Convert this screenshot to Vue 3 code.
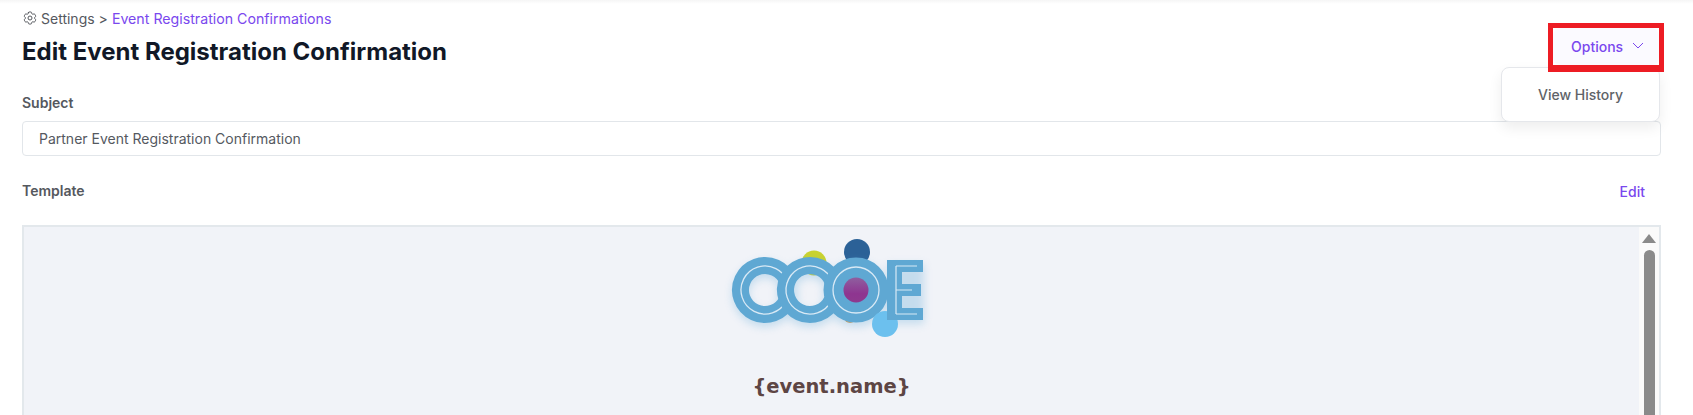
<script setup>
const eventName = '{event.name}'
</script>

<template>
  <div class="page">
    <div class="head">
      <div>
        <div class="crumbs">
          <svg class="gear" viewBox="0 0 24 24" fill="none" stroke="currentColor" stroke-width="1.5">
            <path stroke-linecap="round" stroke-linejoin="round" d="M9.594 3.94c.09-.542.56-.94 1.11-.94h2.593c.55 0 1.02.398 1.11.94l.213 1.281c.063.374.313.686.645.87.074.04.147.083.22.127.325.196.72.257 1.075.124l1.217-.456a1.125 1.125 0 0 1 1.37.49l1.296 2.247a1.125 1.125 0 0 1-.26 1.431l-1.003.827c-.293.241-.438.613-.43.992a7.723 7.723 0 0 1 0 .255c-.008.378.137.75.43.991l1.004.827c.424.35.534.955.26 1.43l-1.298 2.247a1.125 1.125 0 0 1-1.369.491l-1.217-.456c-.355-.133-.75-.072-1.076.124a6.47 6.47 0 0 1-.22.128c-.331.183-.581.495-.644.869l-.213 1.281c-.09.543-.56.94-1.11.94h-2.594c-.55 0-1.019-.398-1.11-.94l-.213-1.281c-.062-.374-.312-.686-.644-.87a6.52 6.52 0 0 1-.22-.127c-.325-.196-.72-.257-1.076-.124l-1.217.456a1.125 1.125 0 0 1-1.369-.49l-1.297-2.247a1.125 1.125 0 0 1 .26-1.431l1.004-.827c.292-.24.437-.613.43-.991a6.932 6.932 0 0 1 0-.255c.007-.38-.138-.751-.43-.992l-1.004-.827a1.125 1.125 0 0 1-.26-1.43l1.297-2.247a1.125 1.125 0 0 1 1.37-.491l1.216.456c.356.133.751.072 1.076-.124.072-.044.146-.086.22-.128.332-.183.582-.495.644-.869l.214-1.28Z" />
            <circle cx="12" cy="12" r="3" />
          </svg>
          <span>Settings</span>
          <span>&gt;</span>
          <a class="link">Event Registration Confirmations</a>
        </div>
        <h1>Edit Event Registration Confirmation</h1>
      </div>

      <div class="options">
        <button class="options-btn">
          Options
          <svg class="chev" viewBox="0 0 12 7" fill="none" stroke="currentColor" stroke-width="1">
            <path d="M1 1l5 5 5-5" />
          </svg>
        </button>
        <div class="menu">View History</div>
        <div class="marker"></div>
      </div>
    </div>

    <label class="label subject-label">Subject</label>
    <div class="input">Partner Event Registration Confirmation</div>

    <div class="template-row">
      <span class="label">Template</span>
      <a class="edit">Edit</a>
    </div>

    <div class="frame">
      <div class="frame-body">
        <svg class="logo" viewBox="0 0 260 125" width="260" height="125">
          <defs>
            <linearGradient id="purple" x1="0" y1="0" x2="0" y2="1">
              <stop offset="0" stop-color="#8f5f9f" />
              <stop offset="0.65" stop-color="#8e3590" />
              <stop offset="1" stop-color="#8e3a8e" />
            </linearGradient>
            <filter id="glow" x="-20%" y="-20%" width="140%" height="150%">
              <feGaussianBlur stdDeviation="4" />
            </filter>
          </defs>
          <circle cx="158" cy="31" r="13" fill="#2b6197" />
          <circle cx="115" cy="42" r="12.5" fill="#c9d22f" />
          <circle cx="151" cy="96" r="6" fill="#d2a05e" />

          <g filter="url(#glow)" opacity="0.3" fill="none" stroke="#5fa8d6" stroke-width="17">
            <circle cx="66" cy="73" r="24.5" />
            <circle cx="111" cy="73" r="24.5" />
            <circle cx="157" cy="73" r="24.5" />
            <path d="M189 43h36v60h-36z" fill="#5fa8d6" stroke="none" />
          </g>

          <g fill="none">
            <circle cx="66" cy="69" r="24.5" stroke="#5fa8d3" stroke-width="17" stroke-dasharray="133 21" transform="rotate(25 66 69)" />
            <circle cx="66" cy="69" r="24" stroke="#d8e9f5" stroke-width="1.3" stroke-dasharray="128 23" transform="rotate(27 66 69)" />
            <circle cx="111" cy="69" r="24.5" stroke="#5fa8d3" stroke-width="17" stroke-dasharray="133 21" transform="rotate(25 111 69)" />
            <circle cx="111" cy="69" r="24" stroke="#d8e9f5" stroke-width="1.3" stroke-dasharray="128 23" transform="rotate(27 111 69)" />
            <circle cx="157" cy="69" r="22" stroke="#5fa8d3" stroke-width="21" />
            <circle cx="157" cy="69" r="23" stroke="#d8e9f5" stroke-width="1.3" />
          </g>
          <circle cx="157" cy="69" r="12.5" fill="url(#purple)" />

          <circle cx="186" cy="103" r="13" fill="#6cc0ee" />
          <path d="M188 39h36v12h-21v12h19v12h-19v12h21v12h-36z" fill="#5fa8d3" />
          <path d="M197 45h21M197 45v48M197 69h16M197 93h21" fill="none" stroke="#d8e9f5" stroke-width="1.2" />
        </svg>
        <h2 class="event-name">{{ eventName }}</h2>
      </div>
      <div class="scrollbar">
        <span class="arrow"></span>
        <span class="thumb"></span>
      </div>
    </div>
  </div>
</template>

<style>
html, body {
  margin: 0;
  background: #fff;
  overflow: hidden;
}
</style>

<style scoped>
.page {
  height: 415px;
  box-sizing: border-box;
  padding: 10px 32px 0 22px;
  font-family: Inter, "Liberation Sans", sans-serif;
  overflow: hidden;
  background: linear-gradient(#f5f5f5, #fff 4px);
}

.head {
  display: flex;
  justify-content: space-between;
  align-items: flex-start;
}

.crumbs {
  display: flex;
  align-items: center;
  gap: 4px;
  height: 16px;
  font-size: 14px;
  color: #55585e;
}

.gear {
  width: 16px;
  height: 16px;
  margin-right: -1px;
}

.link {
  font-size: 14.2px;
  color: #7a48ee;
}

h1 {
  margin: 10px 0 0;
  font-size: 24px;
  line-height: 32px;
  font-weight: 700;
  color: #111827;
}

.options {
  position: relative;
  margin-top: 18px;
  margin-right: 2px;
}

.options-btn {
  display: flex;
  align-items: center;
  gap: 9px;
  width: 106px;
  height: 37px;
  padding: 0 0 0 18px;
  border: 0;
  border-radius: 8px;
  background: #fbfaff;
  color: #7a48ee;
  font: 500 14px Inter, "Liberation Sans", sans-serif;
}

.chev {
  width: 12px;
  height: 7px;
  margin-top: -3px;
}

.menu {
  position: absolute;
  top: 39px;
  right: -1px;
  width: 157px;
  height: 53px;
  display: flex;
  align-items: center;
  justify-content: center;
  background: #fff;
  border: 1px solid #e5e7eb;
  border-radius: 8px;
  box-shadow: 0 6px 14px rgba(0, 0, 0, 0.07);
  font-size: 14px;
  font-weight: 500;
  color: #5f6368;
  z-index: 2;
}

.marker {
  position: absolute;
  inset: -5px -5px -7px;
  border: 5px solid #ed1c24;
  border-bottom-width: 7px;
  z-index: 3;
}

.label {
  font-size: 14px;
  font-weight: 600;
  line-height: 20px;
  color: #55585e;
}

.subject-label {
  display: block;
  margin-top: -22px;
  padding-top: 47px;
}

.input {
  height: 35px;
  box-sizing: border-box;
  margin-top: 8px;
  padding: 0 16px;
  display: flex;
  align-items: center;
  background: #fff;
  border: 1px solid #e2e6ea;
  border-radius: 4px;
  font-size: 14px;
  color: #55595f;
}

.template-row {
  display: flex;
  justify-content: space-between;
  align-items: center;
  height: 20px;
  margin-top: 25px;
}

.edit {
  margin-right: 16px;
  font-size: 14px;
  font-weight: 500;
  color: #7a48ee;
}

.frame {
  display: flex;
  height: 260px;
  box-sizing: border-box;
  margin-top: 24px;
  border: 2px solid #e3e8ec;
  background: #f1f3f8;
}

.frame-body {
  flex: 1;
  text-align: center;
}

.logo {
  display: block;
  margin: 0 auto;
  position: relative;
  left: -3px;
  margin-top: -6px;
}

.event-name {
  margin: 27px 0 0;
  font-family: "DejaVu Sans", Verdana, sans-serif;
  font-size: 19.5px;
  line-height: 28px;
  font-weight: 700;
  color: #5d4544;
}

.scrollbar {
  width: 20px;
  display: flex;
  flex-direction: column;
  align-items: center;
  background: #fafafa;
}

.arrow {
  width: 0;
  height: 0;
  margin-top: 7px;
  border-left: 7px solid transparent;
  border-right: 7px solid transparent;
  border-bottom: 9px solid #8a8a8a;
}

.thumb {
  width: 11px;
  flex: 1;
  margin-top: 7px;
  border-radius: 6px 6px 0 0;
  background: #8a8a8a;
}
</style>
